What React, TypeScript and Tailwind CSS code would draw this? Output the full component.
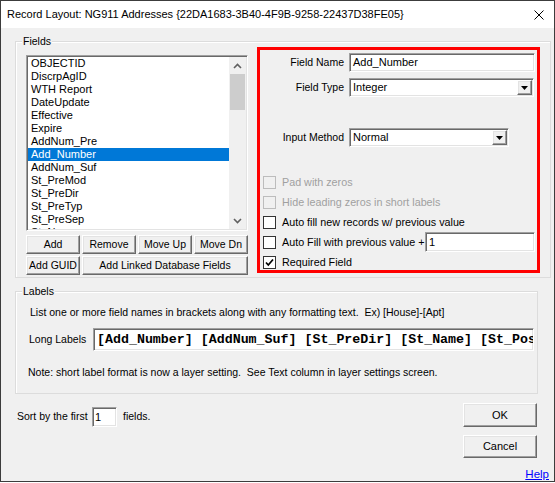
import React from 'react'

const fields = [
  'OBJECTID',
  'DiscrpAgID',
  'WTH Report',
  'DateUpdate',
  'Effective',
  'Expire',
  'AddNum_Pre',
  'Add_Number',
  'AddNum_Suf',
  'St_PreMod',
  'St_PreDir',
  'St_PreTyp',
  'St_PreSep',
  'St_Name',
]

const sunken =
  'border border-t-[#a0a0a0] border-l-[#a0a0a0] border-b-white border-r-white shadow-[inset_1px_1px_0_#696969,inset_-1px_-1px_0_#e3e3e3] bg-white'
const raised =
  'border border-t-white border-l-white border-b-[#696969] border-r-[#696969] shadow-[inset_-1px_-1px_0_#a0a0a0,inset_1px_1px_0_#e3e3e3] bg-[#f0f0f0]'

const Btn = ({ children, className = '' }: { children: React.ReactNode; className?: string }) => (
  <button
    className={`${raised} flex items-center justify-center whitespace-nowrap leading-none text-black ${className}`}
  >
    {children}
  </button>
)

const Chevron = ({ down }: { down?: boolean }) => (
  <svg width="9" height="6" viewBox="0 0 9 6" className={down ? 'rotate-180' : ''}>
    <polyline points="1,5 4.5,1.5 8,5" fill="none" stroke="#606060" strokeWidth="1.6" />
  </svg>
)

const Combo = ({ value, className = '' }: { value: string; className?: string }) => (
  <div className={`${sunken} flex h-[19px] items-center text-[11px] ${className}`}>
    <span className="flex-1 pl-[3px]">{value}</span>
    <span className={`${raised} mr-[1px] flex h-[15px] w-[15px] items-center justify-center`}>
      <svg width="7" height="4" viewBox="0 0 7 4">
        <polygon points="0,0 7,0 3.5,4" fill="#000" />
      </svg>
    </span>
  </div>
)

const Check = ({
  label,
  checked,
  disabled,
  children,
}: {
  label: string
  checked?: boolean
  disabled?: boolean
  children?: React.ReactNode
}) => (
  <div className="flex h-[20px] items-center">
    <span
      className={`ml-[3px] flex h-[13px] w-[13px] items-center justify-center border ${
        disabled ? 'border-[#bcbcbc] bg-[#f0f0f0]' : 'border-[#333333] bg-white'
      }`}
    >
      {checked && (
        <svg width="9" height="9" viewBox="0 0 9 9">
          <polyline points="1,4.5 3.3,7 8,1.5" fill="none" stroke="#000" strokeWidth="1.7" />
        </svg>
      )}
    </span>
    <span className={`ml-[6px] text-[10.75px] ${disabled ? 'text-[#a0a0a0]' : 'text-black'}`}>{label}</span>
    {children}
  </div>
)

export default function App() {
  return (
    <div className="flex h-[482px] w-[555px] flex-col overflow-hidden border border-[#3c3c3c] bg-[#f0f0f0] text-black [font-family:'Liberation_Sans',Arial,sans-serif]">
      <div className="flex h-[27px] shrink-0 items-center justify-between bg-white pl-[6px] text-[11px]">
        <span>Record Layout: NG911 Addresses {'{22DA1683-3B40-4F9B-9258-22437D38FE05}'}</span>
        <svg width="10" height="10" viewBox="0 0 10 10" className="mr-[10px]">
          <path d="M0.5 0.5 L9.5 9.5 M9.5 0.5 L0.5 9.5" stroke="#000" strokeWidth="1" />
        </svg>
      </div>

      {/* Fields */}
      <div className="relative ml-[14px] mt-[13px] flex h-[237px] w-[536px] shrink-0 items-start border border-[#dcdcdc] pl-[10px] shadow-[inset_1px_1px_0_#fff]">
        <span className="absolute -top-[7px] left-[6px] bg-[#f0f0f0] px-[1px] text-[10.5px] leading-[13px]">Fields</span>

        <div className="mt-[13px] flex w-[222px] flex-col">
          <div className={`${sunken} flex h-[176px] p-[1px]`}>
            <div className="flex-1 overflow-hidden">
              {fields.map((f) => (
                <div
                  key={f}
                  className={`h-[13px] whitespace-nowrap pl-[3px] text-[11px] leading-[13px] ${
                    f === 'Add_Number' ? 'bg-[#0078d7] text-white' : ''
                  }`}
                >
                  {f}
                </div>
              ))}
            </div>
            <div className="flex w-[17px] flex-col bg-[#f0f0f0]">
              <div className="flex h-[17px] items-center justify-center">
                <Chevron />
              </div>
              <div className="mx-[1px] h-[36px] bg-[#cdcdcd]" />
              <div className="flex-1" />
              <div className="flex h-[17px] items-center justify-center">
                <Chevron down />
              </div>
            </div>
          </div>
          <div className="mt-[4px] grid h-[19px] grid-cols-4 gap-[2px] text-[10.5px]">
            <Btn>Add</Btn>
            <Btn>Remove</Btn>
            <Btn>Move Up</Btn>
            <Btn>Move Dn</Btn>
          </div>
          <div className="mt-[2px] flex h-[19px] gap-[2px] text-[10.5px]">
            <Btn className="w-[54px]">Add GUID</Btn>
            <Btn className="flex-1">Add Linked Database Fields</Btn>
          </div>
        </div>

        <div className="ml-[9px] mt-[5px] flex h-[226px] w-[283px] flex-col border-[3px] border-[#ff0000] text-[10.5px]">
          <div className="mt-[3px] flex h-[19px] items-center">
            <span className="w-[84px] text-right">Field Name</span>
            <div className={`${sunken} ml-[5px] flex h-[19px] w-[186px] items-center pl-[3px] text-[11px]`}>Add_Number</div>
          </div>
          <div className="mt-[6px] flex h-[19px] items-center">
            <span className="w-[84px] text-right">Field Type</span>
            <Combo value="Integer" className="ml-[5px] w-[185px]" />
          </div>
          <div className="mt-[31px] flex h-[19px] items-center">
            <span className="w-[84px] text-right">Input Method</span>
            <Combo value="Normal" className="ml-[5px] w-[160px]" />
          </div>
          <div className="mt-[25px] flex flex-col">
            <Check label="Pad with zeros" disabled />
            <Check label="Hide leading zeros in short labels" disabled />
            <Check label="Auto fill new records w/ previous value" />
            <Check label="Auto Fill with previous value +">
              <div className={`${sunken} ml-auto mr-[2px] flex h-[20px] w-[110px] items-center pl-[3px] text-[11px]`}>1</div>
            </Check>
            <Check label="Required Field" checked />
          </div>
        </div>
      </div>

      {/* Labels */}
      <div className="relative ml-[14px] mt-[13px] flex h-[103px] w-[523px] shrink-0 flex-col border border-[#dcdcdc] text-[10.5px] shadow-[inset_1px_1px_0_#fff]">
        <span className="absolute -top-[7px] left-[6px] bg-[#f0f0f0] px-[1px] leading-[13px]">Labels</span>
        <div className="ml-[14px] mt-[14px] whitespace-pre leading-[13px]">
          List one or more field names in brackets along with any formatting text.  Ex) [House]-[Apt]
        </div>
        <div className="mt-[9px] flex h-[23px] items-center">
          <span className="ml-[13px] w-[64px]">Long Labels</span>
          <div
            className={`${sunken} flex h-[23px] w-[441px] items-center overflow-hidden whitespace-nowrap pl-[3px] text-[13.3px] font-bold [font-family:'Liberation_Mono',monospace]`}
          >
            [Add_Number] [AddNum_Suf] [St_PreDir] [St_Name] [St_PosTyp]
          </div>
        </div>
        <div className="ml-[12px] mt-[15px] whitespace-pre leading-[13px]">
          Note: short label format is now a layer setting.  See Text column in layer settings screen.
        </div>
      </div>

      {/* Bottom */}
      <div className="flex flex-1">
        <div className="ml-[16px] mt-[13px] flex h-[20px] items-center text-[10.5px]">
          <span className="w-[75px]">Sort by the first</span>
          <div className={`${sunken} flex h-[20px] w-[25px] items-center pl-[2px] text-[11px]`}>1</div>
          <span className="ml-[6px]">fields.</span>
        </div>
        <div className="ml-auto mr-[5px] mt-[9px] flex w-[86px] flex-col text-[11px]">
          <Btn className="h-[24px] w-[74px]">OK</Btn>
          <Btn className="mt-[8px] h-[23px] w-[74px]">Cancel</Btn>
          <span className="mt-[10px] self-end text-[11.5px] leading-[13px] text-[#0000ff] underline">Help</span>
        </div>
      </div>
    </div>
  )
}
